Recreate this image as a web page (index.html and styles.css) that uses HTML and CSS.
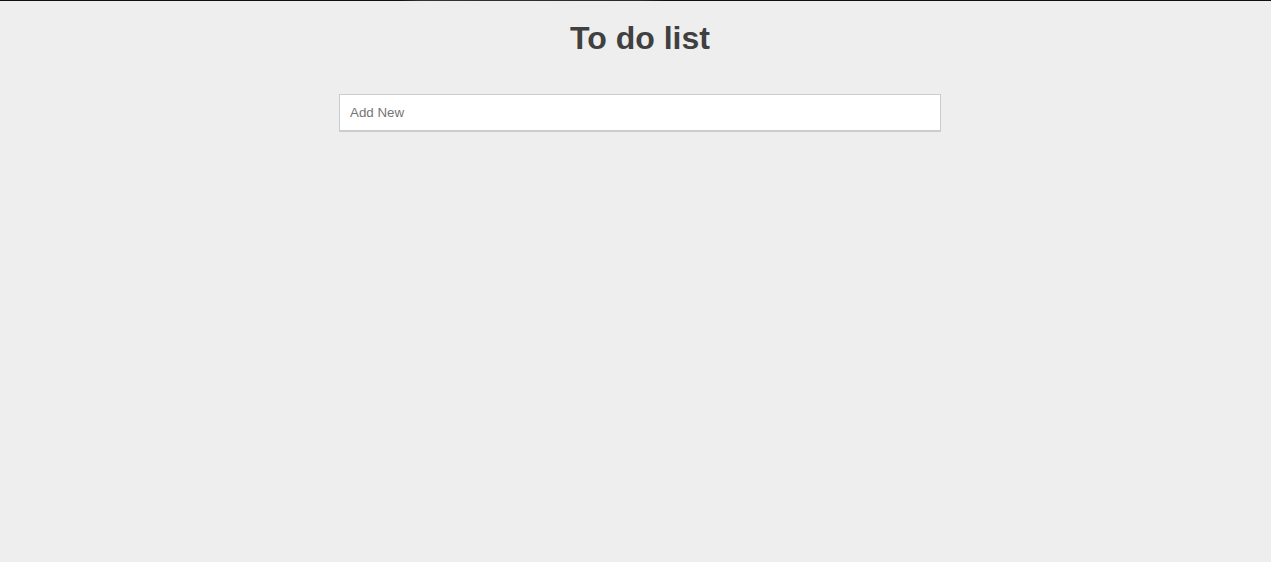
FILE: index.html
```html
<!DOCTYPE html>
<html lang="en">
<head>
<meta charset="utf-8">
<title>To do list</title>
<link rel="stylesheet" href="styles.css">
</head>
<body>
<div class="topbar"></div>
<main class="app">
  <h1 class="title">To do list</h1>
  <input class="add-input" type="text" placeholder="Add New">
</main>
</body>
</html>
```

FILE: styles.css
```css
html, body {
  margin: 0;
  padding: 0;
  height: 100%;
  background: #eeeeee;
}

body {
  font-family: "Liberation Sans", Arial, sans-serif;
}

.topbar {
  height: 1px;
  background: linear-gradient(to right, #111 0, #111 400px, #333 420px, #2a2a2a 640px, #111 665px, #111 100%);
}

.app {
  display: flex;
  flex-direction: column;
  align-items: center;
  padding-left: 9px;
}

.title {
  margin: 19px 0 0;
  font-size: 32px;
  font-weight: bold;
  color: #404040;
  line-height: 37px;
}

.add-input {
  box-sizing: border-box;
  margin-top: 37px;
  width: 602px;
  height: 38px;
  padding: 0 10px;
  border: 1px solid #cccccc;
  border-bottom: 2px solid #cccccc;
  background: #ffffff;
  font-family: "Liberation Sans", Arial, sans-serif;
  font-size: 13.333px;
  color: #333;
  outline: none;
}

.add-input::placeholder {
  color: #757575;
}
```
